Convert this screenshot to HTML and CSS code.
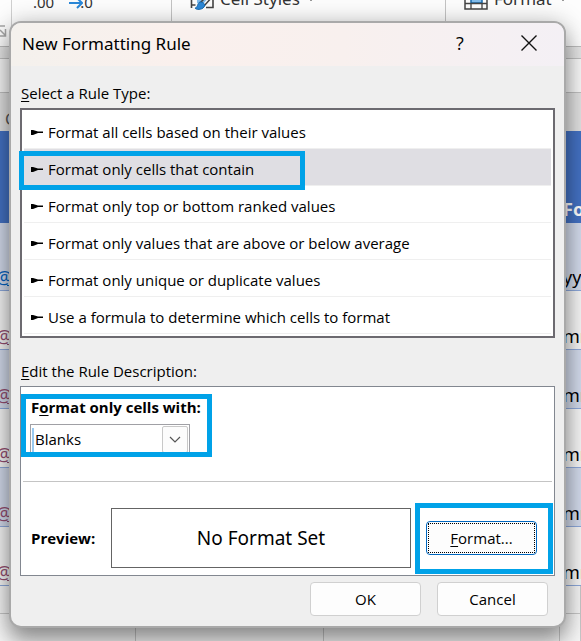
FILE: index.html
```html
<!DOCTYPE html>
<html lang="en">
<head>
<meta charset="utf-8">
<title>New Formatting Rule</title>
<link rel="stylesheet" href="styles.css">
</head>
<body>
<div class="workbook">
  <header class="ribbon">
    <div class="group group-number">
      <span class="decimals">.00</span>
      <svg class="decimal-arrow" width="14" height="14" viewBox="0 0 14 14" fill="none" stroke="#2b88d8" stroke-width="2"><path d="M0 7h12M8 2l5 5-5 5"/></svg>
      <span class="decimals">.0</span>
      <svg class="launcher" width="8" height="13" viewBox="0 0 8 13" fill="none" stroke="#a6a6a6" stroke-width="1.500"><path d="M0 1h5M0 5l5 5M5.500 4v7H0"/></svg>
    </div>
    <div class="group group-styles">
      <svg width="24" height="20" viewBox="0 0 24 20" fill="none"><path d="M1.500 0v17M1.500 8h5M1.500 14h4M16 16.500h7V6" stroke="#444" stroke-width="1.600"/><path d="M6 0v9" stroke="#444"/><path d="M7 0h12v6l-5 6H7z" fill="#83bdec"/><path d="M23 5L14 15M19 3l-9 9" stroke="#444" stroke-width="1.500"/><path d="M10 11c3 0 6 2 4 5-2 3-8 3-9 1 3 0 2-5 5-6z" fill="#2b88d8" stroke="#1769ad"/></svg>
      <span>Cell Styles</span><i class="caret"></i>
    </div>
    <div class="group group-cells">
      <svg width="24" height="20" viewBox="0 0 24 20" fill="none"><path d="M1 0h22v18H1z" fill="#fff" stroke="#444" stroke-width="1.500"/><path d="M7 0h11v12H7z" fill="#83bdec" stroke="#1769ad" stroke-width="1.500"/><path d="M1 6h6M18 6h5M1 12.500h22M7 12v6M18 12v6" stroke="#444" stroke-width="1.300"/></svg>
      <span>Format</span><i class="caret"></i>
    </div>
  </header>
  <div class="formula-bar"></div>
  <div class="column-heads"><span>C</span></div>
  <table class="sheet">
    <colgroup><col class="col-a"><col class="col-b"><col class="col-c"><col></colgroup>
    <thead><tr><th></th><th></th><th></th><th>Fo</th></tr></thead>
    <tbody>
      <tr class="tall"><td class="link fresh">@</td><td></td><td></td><td>yyyy</td></tr>
      <tr><td class="link">@</td><td></td><td></td><td>mmm</td></tr>
      <tr><td class="link">@</td><td></td><td></td><td>mmm</td></tr>
      <tr><td class="link">@</td><td></td><td></td><td>mmm</td></tr>
      <tr><td class="link">@</td><td></td><td></td><td>mmm</td></tr>
      <tr><td class="link">@</td><td></td><td></td><td>mmm</td></tr>
      <tr class="blank short"><td></td><td></td><td></td><td></td></tr>
      <tr class="blank"><td></td><td></td><td></td><td></td></tr>
    </tbody>
  </table>
</div>

<section class="dialog" role="dialog" aria-labelledby="title">
  <header class="titlebar">
    <h1 id="title">New Formatting Rule</h1>
    <button class="title-button" type="button">?</button>
    <button class="title-button close" type="button" aria-label="Close"><svg width="16" height="16" viewBox="0 0 16 16" stroke="#111" stroke-width="1.400"><path d="M.5.5l15 15M15.500.5l-15 15"/></svg></button>
  </header>
  <form class="content">
    <h2 id="types"><u>S</u>elect a Rule Type:</h2>
    <ul class="rules" role="listbox" aria-labelledby="types">
      <li role="option"><svg class="mark" viewBox="0 0 12 7"><path d="M0 1h2l5 1.500h5v1.500H7L2 6H0z"/></svg>Format all cells based on their values</li>
      <li role="option" aria-selected="true" class="selected"><svg class="mark" viewBox="0 0 12 7"><path d="M0 1h2l5 1.500h5v1.500H7L2 6H0z"/></svg>Format only cells that contain<i class="highlight highlight-rule"></i></li>
      <li role="option"><svg class="mark" viewBox="0 0 12 7"><path d="M0 1h2l5 1.500h5v1.500H7L2 6H0z"/></svg>Format only top or bottom ranked values</li>
      <li role="option"><svg class="mark" viewBox="0 0 12 7"><path d="M0 1h2l5 1.500h5v1.500H7L2 6H0z"/></svg>Format only values that are above or below average</li>
      <li role="option"><svg class="mark" viewBox="0 0 12 7"><path d="M0 1h2l5 1.500h5v1.500H7L2 6H0z"/></svg>Format only unique or duplicate values</li>
      <li role="option"><svg class="mark" viewBox="0 0 12 7"><path d="M0 1h2l5 1.500h5v1.500H7L2 6H0z"/></svg>Use a formula to determine which cells to format</li>
    </ul>
    <h2 class="edit-heading"><u>E</u>dit the Rule Description:</h2>
    <div class="description">
      <div class="condition">
        <label for="condition">F<u>o</u>rmat only cells with:</label>
        <div class="picker">
          <select id="condition"><option>Blanks</option></select>
          <span class="drop"><svg width="12" height="7" viewBox="0 0 12 7" fill="none" stroke="#555" stroke-width="1.200"><path d="M1 1l5 5 5-5"/></svg></span>
        </div>
        <i class="highlight highlight-condition"></i>
      </div>
      <div class="preview">
        <strong>Preview:</strong>
        <output class="sample">No Format Set</output>
        <div class="format-slot"><button class="button focused" type="button"><span><u>F</u>ormat...</span></button><i class="highlight highlight-format"></i></div>
      </div>
    </div>
    <footer class="actions">
      <button class="button" type="button">OK</button>
      <button class="button" type="button">Cancel</button>
    </footer>
  </form>
</section>
</body>
</html>
```
FILE: styles.css
```css
* { box-sizing: border-box; }

body {
  margin: 0;
  min-height: 100vh;
  position: relative;
  overflow: hidden;
  font: 15px/20px "Open Sans", "Noto Sans", sans-serif;
  color: #000;
}

h1, h2, ul { margin: 0; padding: 0; font-weight: 400; }
u { text-decoration-thickness: 1px; text-underline-offset: 2px; }

.workbook {
  height: 100vh;
  overflow: hidden;
  background: #e6e6e6;
}

.ribbon {
  display: flex;
  height: 47px;
  background: #fdfdfd;
  border-bottom: 1px solid #bdbdbd;
  font: 17px/20px "Noto Sans", sans-serif;
  color: #333;
}

.group {
  position: relative;
  display: flex;
  align-items: flex-start;
  height: 100%;
}
.group > * { flex: none; }
.group + .group { border-left: 1px solid #c4c4c4; }
.group > span { margin-top: -11px; }
.group-number { width: 171px; padding-left: 33px; }
.group-number .decimals { margin-top: -8px; font-size: 15px; }
.decimal-arrow { margin: -4px -3px 0 15px; }
.launcher { position: absolute; left: 0; top: 25px; }
.group-number::before {
  content: "";
  position: absolute;
  left: 11px;
  height: 46px;
  border-left: 1px solid #d0d0d0;
}
.group-styles { width: 274px; padding-left: 18px; gap: 6px; }
.group-styles svg, .group-cells svg { margin-top: -9px; }
.group-cells { padding-left: 18px; gap: 6px; }
.caret { width: 2px; height: 1px; margin: 0 0 0 4px; background: #999; }

.formula-bar {
  height: 35px;
  margin-top: 11px;
  background: #f8f8f8;
  border: solid #c0c0c0;
  border-width: 1px 0;
}

.column-heads {
  height: 38px;
  padding: 16px 0 0 5px;
  background: #e2e2e2;
  font-size: 17px;
  color: #555;
}

.sheet {
  width: 100%;
  table-layout: fixed;
  border-collapse: separate;
  border-spacing: 0;
  font-family: "Noto Sans", sans-serif;
  font-size: 18px;
}
.col-a { width: 136px; }
.col-b { width: 188px; }
.col-c { width: 236px; }
.sheet th {
  height: 92px;
  padding: 0 0 4px 3px;
  vertical-align: bottom;
  text-align: left;
  white-space: nowrap;
  background: #4472c4;
  color: #fff;
}
.sheet td {
  height: 59px;
  padding: 0 0 3px 3px;
  vertical-align: bottom;
  white-space: nowrap;
  overflow: hidden;
  border-bottom: 1px solid #8ea9db;
  background: #f6f6f6;
}
.sheet .tall td { height: 68px; }
.sheet tbody tr:nth-child(odd):not(.blank) td { background: #d3dbec; }
.sheet .link { padding-left: 0; text-indent: -4px; color: #954f72; text-decoration: underline; }
.sheet .fresh { color: #0563c1; }
.sheet .blank td { border: solid #c8c8c8; border-width: 0 1px 1px 0; }
.sheet .short td { height: 28px; }

.dialog {
  position: absolute;
  top: 21px;
  left: 9px;
  right: 15px;
  border: 2px solid #a9a9a9;
  border-radius: 12px;
  background: #efefef;
  background-clip: padding-box;
  box-shadow: 0 14px 22px rgba(0, 0, 0, .36), 0 0 24px rgba(0, 0, 0, .2);
}

.titlebar {
  display: flex;
  align-items: center;
  height: 43px;
  padding: 0 9px 0 11px;
  border-radius: 10px 10px 0 0;
  background: linear-gradient(90deg, #f4f1ed, #faf0ed 30%, #f8f0ee 60%, #f4f0f5);
}
.titlebar h1 { flex: 1; padding-bottom: 2px; font: 17px/24px "Noto Sans", sans-serif; }
.title-button {
  width: 70px;
  height: 40px;
  padding: 0 2px 4px 0;
  border: 0;
  background: none;
  font: 18px/24px "Open Sans", sans-serif;
}
.close { display: grid; place-items: center; width: 50px; margin-left: 9px; }

.content { padding: 17px 9px 10px; }
.content h2 { padding-left: 1px; font-size: 15px; line-height: 20px; }

.rules {
  margin-top: 5px;
  padding: 2px;
  border: 2px solid #6c6a70;
  background: #fff;
  list-style: none;
}
.rules li {
  position: relative;
  display: flex;
  align-items: center;
  gap: 5px;
  height: 37px;
  padding: 4px 0 0 7px;
  border-bottom: 1px solid #efefef;
}
.rules .selected { background: #dfdee3; }
.mark { width: 12px; height: 7px; flex: none; }

.highlight {
  position: absolute;
  border: 5px solid #00a2e8;
  pointer-events: none;
}
.highlight-rule { left: -5px; top: 2px; width: 286px; height: 39px; }

.content .edit-heading { margin-top: 23px; }

.description {
  margin-top: 5px;
  border: 1px solid #828790;
  background: #fff;
}
.condition {
  position: relative;
  height: 95px;
  margin: 0 2px;
  padding: 10px 0 0 7px;
  border-bottom: 1px solid #c4c4c4;
}
.condition label { display: block; padding-left: 1px; font-weight: 700; }
.highlight-condition { left: -2px; top: 7px; width: 191px; height: 63px; }
.picker {
  position: relative;
  width: 160px;
  height: 30px;
  margin-top: 7px;
}
.picker select {
  width: 100%;
  height: 100%;
  padding: 0 4px;
  border: 1px solid #a0a0a5;
  border-radius: 0;
  background: linear-gradient(#99c9f0, #99c9f0) 1px 3px / 2px 24px no-repeat #fff;
  appearance: none;
  font: inherit;
  color: #000;
}
.drop {
  position: absolute;
  top: 2px;
  right: 2px;
  bottom: 1px;
  display: grid;
  place-items: center;
  width: 26px;
  border: 1px solid #c8c8c8;
  border-radius: 2px;
  background: #fcfcfc;
  pointer-events: none;
}

.preview {
  display: flex;
  align-items: center;
  padding: 26px 17px 7px 10px;
}
.preview strong { width: 80px; }
.sample {
  flex: 1;
  height: 60px;
  border: 1px solid #646464;
  font: 19px/58px "Noto Sans", sans-serif;
  text-align: center;
}
.format-slot { position: relative; margin-left: 15px; }
.highlight-format { left: -11px; top: -18px; width: 138px; height: 71px; }

.button {
  display: block;
  width: 111px;
  height: 34px;
  padding: 1px;
  border: 1px solid #d0d0d0;
  border-radius: 4px;
  background: #fdfdfd;
  font: inherit;
  color: #000;
}
.focused { border-color: #0067c0; }
.focused span { display: block; height: 30px; line-height: 28px; border: 1px dotted #000; }

.actions {
  display: flex;
  justify-content: flex-end;
  gap: 16px;
  padding: 6px 7px 0 0;
}
```
